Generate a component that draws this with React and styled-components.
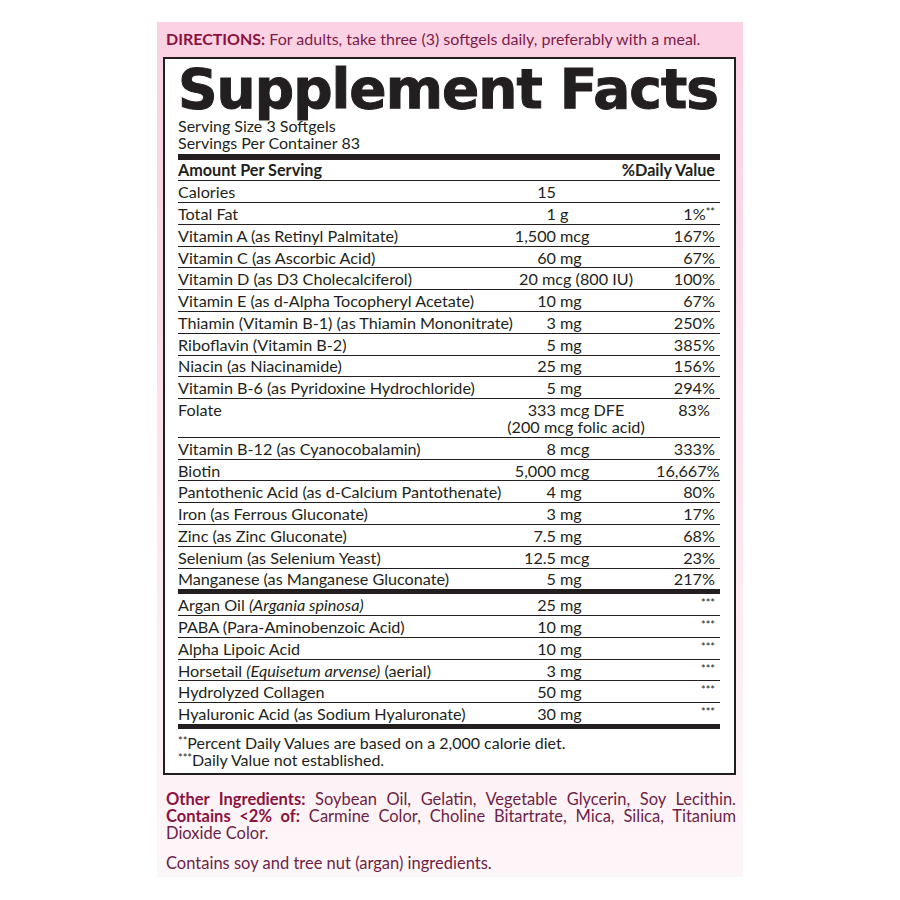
import React from 'react';
import styled, { createGlobalStyle } from 'styled-components';

const GlobalStyle = createGlobalStyle`
  html, body {
    margin: 0;
    padding: 0;
    background: #ffffff;
  }
  * {
    box-sizing: border-box;
  }
`;

const Page = styled.div`
  width: 900px;
  height: 900px;
  padding-top: 22px;
  background: #ffffff;
  font-family: Lato, "Open Sans", sans-serif;
`;

const Panel = styled.div`
  margin-left: 157px;
  width: 586px;
  height: 855px;
  padding: 7.5px 7px 0 6px;
  background: linear-gradient(to bottom, #fbd1e3 0%, #fcdce9 35%, #fdeef4 75%, #fdf6f9 100%);
`;

const Directions = styled.p`
  margin: 0 0 10.5px 3px;
  font-size: 16px;
  line-height: 17px;
  color: #7b1d4a;
  white-space: nowrap;
`;

const Label = styled.span`
  font-weight: 700;
  color: #8a1240;
`;

const FactsBox = styled.div`
  background: #ffffff;
  border: 2px solid #231f20;
  padding: 0 14px 5px 13px;
  color: #231f20;
`;

const Title = styled.h1`
  margin: 2px 0 0;
  font-family: "DejaVu Sans", sans-serif;
  font-weight: 700;
  font-size: 55px;
  line-height: 56px;
  letter-spacing: -1px;
  -webkit-text-stroke: 1px #231f20;
  white-space: nowrap;
`;

const Serving = styled.div`
  margin-top: -0.5px;
  font-size: 16px;
  line-height: 17px;
`;

const Rule = styled.div`
  height: ${(p) => p.$h}px;
  background: #231f20;
  margin-top: ${(p) => p.$mt || 0}px;
`;

const Row = styled.div`
  display: grid;
  grid-template-columns: 318px 60px 100px 1fr;
  align-items: start;
  padding: 1.9px 0;
  font-size: 16.2px;
  line-height: 17px;
  font-weight: ${(p) => (p.$bold ? 700 : 400)};
  border-bottom: ${(p) => (p.$last ? 'none' : '1px solid #231f20')};
  white-space: nowrap;
`;

const Name = styled.div``;

const Num = styled.div`
  text-align: right;
`;

const Unit = styled.div`
  padding-left: 4px;
`;

const Amount = styled.div`
  grid-column: 2 / 4;
  text-align: center;
`;

const Dv = styled.div`
  grid-column: ${(p) => (p.$wide ? '2 / 5' : '4')};
  text-align: right;
  padding-right: ${(p) => (p.$pr != null ? p.$pr : 5)}px;
`;

const Sup = styled.span`
  font-size: 11px;
  line-height: 1;
  vertical-align: top;
  position: relative;
  top: 1px;
`;

const Footnotes = styled.div`
  padding-top: 5px;
  font-size: 16px;
  line-height: 17px;
`;

const Ingredients = styled.div`
  margin-top: 15.5px;
  padding-left: 3px;
  font-size: 16.5px;
  line-height: 17px;
  color: #6e1f45;
`;

const Para = styled.p`
  margin: 0;
  text-align: justify;
  text-align-last: ${(p) => (p.$full ? 'justify' : 'auto')};
  margin-bottom: ${(p) => p.$mb || 0}px;
`;

const nutrients = [
  { name: 'Calories', num: '15' },
  { name: 'Total Fat', num: '1', unit: 'g', dv: '1%', mark: '**' },
  { name: 'Vitamin A (as Retinyl Palmitate)', num: '1,500', unit: 'mcg', dv: '167%' },
  { name: 'Vitamin C (as Ascorbic Acid)', num: '60', unit: 'mg', dv: '67%' },
  { name: 'Vitamin D (as D3 Cholecalciferol)', amount: ['20 mcg (800 IU)'], dv: '100%' },
  { name: 'Vitamin E (as d-Alpha Tocopheryl Acetate)', num: '10', unit: 'mg', dv: '67%' },
  { name: 'Thiamin (Vitamin B-1) (as Thiamin Mononitrate)', num: '3', unit: 'mg', dv: '250%' },
  { name: 'Riboflavin (Vitamin B-2)', num: '5', unit: 'mg', dv: '385%' },
  { name: 'Niacin (as Niacinamide)', num: '25', unit: 'mg', dv: '156%' },
  { name: 'Vitamin B-6 (as Pyridoxine Hydrochloride)', num: '5', unit: 'mg', dv: '294%' },
  { name: 'Folate', amount: ['333 mcg DFE', '(200 mcg folic acid)'], dv: '83%', pr: 10 },
  { name: 'Vitamin B-12 (as Cyanocobalamin)', num: '8', unit: 'mcg', dv: '333%' },
  { name: 'Biotin', num: '5,000', unit: 'mcg', dv: '16,667%' },
  { name: 'Pantothenic Acid (as d-Calcium Pantothenate)', num: '4', unit: 'mg', dv: '80%' },
  { name: 'Iron (as Ferrous Gluconate)', num: '3', unit: 'mg', dv: '17%' },
  { name: 'Zinc (as Zinc Gluconate)', num: '7.5', unit: 'mg', dv: '68%' },
  { name: 'Selenium (as Selenium Yeast)', num: '12.5', unit: 'mcg', dv: '23%' },
  { name: 'Manganese (as Manganese Gluconate)', num: '5', unit: 'mg', dv: '217%' },
];

const others = [
  { name: <>Argan Oil <i>(Argania spinosa)</i></>, num: '25', unit: 'mg', mark: '***' },
  { name: 'PABA (Para-Aminobenzoic Acid)', num: '10', unit: 'mg', mark: '***' },
  { name: 'Alpha Lipoic Acid', num: '10', unit: 'mg', mark: '***' },
  { name: <>Horsetail <i>(Equisetum arvense)</i> (aerial)</>, num: '3', unit: 'mg', mark: '***' },
  { name: 'Hydrolyzed Collagen', num: '50', unit: 'mg', mark: '***' },
  { name: 'Hyaluronic Acid (as Sodium Hyaluronate)', num: '30', unit: 'mg', mark: '***' },
];

const FactRow = ({ item, last }) => (
  <Row $last={last}>
    <Name>{item.name}</Name>
    {item.amount ? (
      <Amount>
        {item.amount.map((line) => (
          <div key={line}>{line}</div>
        ))}
      </Amount>
    ) : (
      <>
        <Num>{item.num}</Num>
        <Unit>{item.unit}</Unit>
      </>
    )}
    <Dv $pr={item.pr}>
      {item.dv}
      {item.mark && <Sup>{item.mark}</Sup>}
    </Dv>
  </Row>
);

const App = () => (
  <Page>
    <GlobalStyle />
    <Panel>
      <Directions>
        <Label>DIRECTIONS:</Label> For adults, take three (3) softgels daily, preferably with a meal.
      </Directions>
      <FactsBox>
        <Title>Supplement Facts</Title>
        <Serving>
          Serving Size 3 Softgels
          <br />
          Servings Per Container 83
        </Serving>
        <Rule $h={5.5} $mt={3.5} />
        <Row $bold>
          <Name>Amount Per Serving</Name>
          <Dv $wide>%Daily Value</Dv>
        </Row>
        {nutrients.map((item, i) => (
          <FactRow key={i} item={item} last={i === nutrients.length - 1} />
        ))}
        <Rule $h={5} />
        {others.map((item, i) => (
          <FactRow key={i} item={item} last={i === others.length - 1} />
        ))}
        <Rule $h={5} />
        <Footnotes>
          <Sup>**</Sup>Percent Daily Values are based on a 2,000 calorie diet.
          <br />
          <Sup>***</Sup>Daily Value not established.
        </Footnotes>
      </FactsBox>
      <Ingredients>
        <Para $full>
          <Label>Other Ingredients:</Label> Soybean Oil, Gelatin, Vegetable Glycerin, Soy Lecithin.
        </Para>
        <Para $mb={13}>
          <Label>Contains &lt;2% of:</Label> Carmine Color, Choline Bitartrate, Mica, Silica, Titanium Dioxide Color.
        </Para>
        <Para>Contains soy and tree nut (argan) ingredients.</Para>
      </Ingredients>
    </Panel>
  </Page>
);

export default App;
